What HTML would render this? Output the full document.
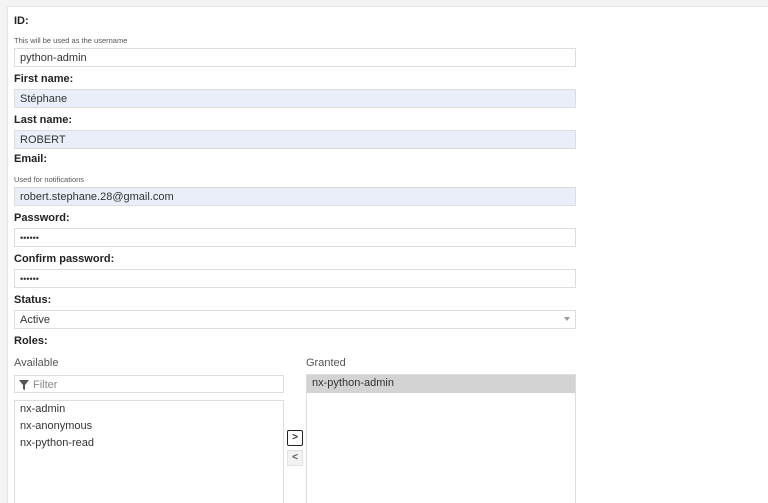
<!DOCTYPE html>
<html style="width:768px;height:503px;overflow:hidden"><head><style>
*{box-sizing:border-box;margin:0;padding:0}
body{width:768px;height:503px;overflow:hidden;background:#f3f3f3;font-family:"Liberation Sans",sans-serif;color:#333;position:relative}
.panel{position:absolute;left:7px;top:6px;width:761px;height:497px;background:#fff;border-top:1px solid #e6e6e6;border-left:1px solid #e6e6e6}
.a{position:absolute}
.lbl{font-size:11px;font-weight:bold;color:#222;left:14px}
.help{font-size:7.5px;color:#555;left:14px}
.inp{left:14px;width:562px;height:19px;border:1px solid #ddd;font-size:11px;padding:3px 0 0 5px;color:#333;background:#fff}
.blue{background:#e9eef9}
.list{border:1px solid #ddd;border-bottom:none;background:#fff}
.it{font-size:11px;height:17px;padding:2px 0 0 5px}
.btn{width:16px;height:16px;left:287px;font-size:10px;text-align:center;line-height:14px;font-weight:bold}
</style></head><body>
<div class="panel"></div>
<div class="a lbl" style="top:15px">ID:</div>
<div class="a help" style="top:36px">This will be used as the username</div>
<div class="a inp" style="top:48px">python-admin</div>
<div class="a lbl" style="top:73px">First name:</div>
<div class="a inp blue" style="top:89px">Stéphane</div>
<div class="a lbl" style="top:114px">Last name:</div>
<div class="a inp blue" style="top:130px">ROBERT</div>
<div class="a lbl" style="top:153px">Email:</div>
<div class="a help" style="top:175px">Used for notifications</div>
<div class="a inp blue" style="top:187px">robert.stephane.28@gmail.com</div>
<div class="a lbl" style="top:212px">Password:</div>
<div class="a inp" style="top:228px;font-size:9px;padding-top:4px">••••••</div>
<div class="a lbl" style="top:253px">Confirm password:</div>
<div class="a inp" style="top:269px;font-size:9px;padding-top:4px">••••••</div>
<div class="a lbl" style="top:294px">Status:</div>
<div class="a inp" style="top:310px">Active<span style="position:absolute;right:5px;top:6px;border:3px solid transparent;border-top:4px solid #999"></span></div>
<div class="a lbl" style="top:335px">Roles:</div>
<div class="a" style="left:14px;top:357px;font-size:11px;color:#555">Available</div>
<div class="a" style="left:306px;top:357px;font-size:11px;color:#555">Granted</div>
<div class="a inp" style="top:375px;width:270px;height:18px;color:#888;padding-left:18px">Filter
<svg style="position:absolute;left:4px;top:4px" width="10" height="10" viewBox="0 0 10 10"><path d="M0 0H10L6 5V10L4 9V5Z" fill="#555"/></svg></div>
<div class="a list" style="left:14px;top:400px;width:270px;height:103px">
<div class="it">nx-admin</div><div class="it">nx-anonymous</div><div class="it">nx-python-read</div></div>
<div class="a list" style="left:306px;top:374px;width:270px;height:129px">
<div class="it" style="background:#d3d3d3;height:18px">nx-python-admin</div></div>
<div class="a btn" style="top:430px;border:1px solid #222;border-radius:2px;background:#fff">&gt;</div>
<div class="a btn" style="top:450px;border:1px solid #e2e2e2;background:#f2f2f2;color:#555">&lt;</div>
</body></html>
